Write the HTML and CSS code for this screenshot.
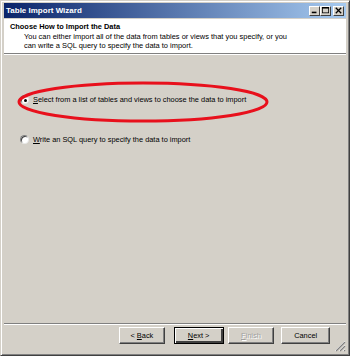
FILE: index.html
```html
<!DOCTYPE html>
<html>
<head>
<meta charset="utf-8">
<link rel="stylesheet" href="styles.css">
</head>
<body>
<div class="window">
  <div class="titlebar">
    <span class="title">Table Import Wizard</span>
    <div class="tbtns">
      <span class="tbtn"><svg width="9" height="9" viewBox="0 0 9 9"><rect x="1" y="6" width="6" height="2" fill="#000"/></svg></span>
      <span class="tbtn"><svg width="9" height="9" viewBox="0 0 9 9"><rect x="0.5" y="0.5" width="8" height="7" fill="none" stroke="#000"/><rect x="0" y="0" width="9" height="2" fill="#000"/></svg></span>
      <span class="tbtn close"><svg width="9" height="9" viewBox="0 0 9 9"><path d="M1 1 L8 8 M8 1 L1 8" stroke="#000" stroke-width="1.6"/></svg></span>
    </div>
  </div>
  <div class="header">
    <div class="h-title">Choose How to Import the Data</div>
    <div class="h-desc">You can either import all of the data from tables or views that you specify, or you<br>can write a SQL query to specify the data to import.</div>
  </div>
  <div class="content">
    <div class="opt opt1"><span class="radio checked"></span><span><u>S</u>elect from a list of tables and views to choose the data to import</span></div>
    <div class="opt opt2"><span class="radio"></span><span><u>W</u>rite an SQL query to specify the data to import</span></div>
    <svg class="ellipse" width="256" height="44" viewBox="0 0 256 44"><ellipse cx="128" cy="22" rx="124" ry="19" fill="none" stroke="#e8101c" stroke-width="3"/></svg>
  </div>
  <div class="footer">
    <button class="btn">&lt; <u>B</u>ack</button>
    <button class="btn def"><u>N</u>ext &gt;</button>
    <button class="btn dis"><u>F</u>inish</button>
    <button class="btn cancel">Cancel</button>
    <svg class="grip" width="12" height="12" viewBox="0 0 12 12"><path d="M11 1 L1 11 M11 5 L5 11 M11 9 L9 11" stroke="#fff" stroke-width="1"/><path d="M11 2 L2 11 M11 6 L6 11 M11 10 L10 11" stroke="#808080" stroke-width="1.2"/></svg>
  </div>
</div>
</body>
</html>
```
FILE: styles.css
```css
html, body { margin: 0; padding: 0; }
body { width: 350px; height: 356px; background: #d4d0c8; font-family: "Liberation Sans", Arial, sans-serif; font-size: 7.4px; color: #000; overflow: hidden; }
.window { box-sizing: border-box; width: 350px; height: 356px; background: #d4d0c8; border: 1px solid; border-color: #d4d0c8 #404040 #404040 #d4d0c8; box-shadow: inset 1px 1px 0 #fff, inset -1px -1px 0 #808080; padding: 2px 3px 3px 3px; display: flex; flex-direction: column; }
.titlebar { height: 15px; background: linear-gradient(to right, #0a246a, #a6caf0); display: flex; align-items: center; justify-content: space-between; padding: 0 2px 0 2px; margin-bottom: 1px; }
.title { color: #fff; font-weight: bold; font-family: "Liberation Sans", Arial, sans-serif; font-size: 8px; }
.tbtns { display: flex; }
.tbtn { box-sizing: border-box; width: 11px; height: 10px; background: #d4d0c8; border: 1px solid; border-color: #fff #404040 #404040 #fff; display: flex; align-items: center; justify-content: center; }
.tbtn svg { width: 7px; height: 7px; }
.tbtn.close { margin-left: 2px; }
.header { background: #fff; height: 35px; border-bottom: 1px solid #808080; box-shadow: 0 1px 0 #fff; padding: 3px 0 0 6px; box-sizing: border-box; }
.h-title { font-weight: bold; font-size: 7.4px; line-height: 10px; }
.h-desc { padding-left: 14px; line-height: 9px; font-size: 7.45px; white-space: nowrap; }
.content { flex: 1; position: relative; padding: 0 0 0 16px; }
.opt { display: flex; align-items: center; gap: 4px; font-size: 7.4px; }
.opt1 { margin-top: 41px; }
.opt2 { margin-top: 31px; }
.radio { box-sizing: border-box; width: 9px; height: 9px; border-radius: 50%; background: #fff; border: 1px solid; border-color: #808080 #e8e8e8 #e8e8e8 #808080; box-shadow: inset 1px 1px 0 #404040; position: relative; }
.radio.checked::after { content: ""; position: absolute; left: 2.5px; top: 2.5px; width: 3px; height: 3px; border-radius: 50%; background: #000; }
.ellipse { position: absolute; left: 11px; top: 26px; }
.footer { height: 29px; border-top: 1px solid #808080; box-shadow: inset 0 1px 0 #fff; display: flex; align-items: flex-start; padding: 3px 12px 0 115px; position: relative; box-sizing: border-box; }
.btn { box-sizing: border-box; width: 47px; height: 17px; font-family: "Liberation Sans", Arial, sans-serif; font-size: 7.4px; background: #d4d0c8; border: 1px solid; border-color: #fff #404040 #404040 #fff; box-shadow: inset -1px -1px 0 #808080; padding: 0; margin-right: 4px; color: #000; }
.btn.def { width: 51px; border: 1px solid #000; box-shadow: inset 1px 1px 0 #fff, inset -2px -2px 0 #404040; margin-left: 5px; }
.btn.dis { color: #a0a0a0; text-shadow: 1px 1px 0 #fff; width: 48px; margin-right: 7px; }
.btn.cancel { width: 50px; }
.grip { position: absolute; right: 0; bottom: 0; }
```
